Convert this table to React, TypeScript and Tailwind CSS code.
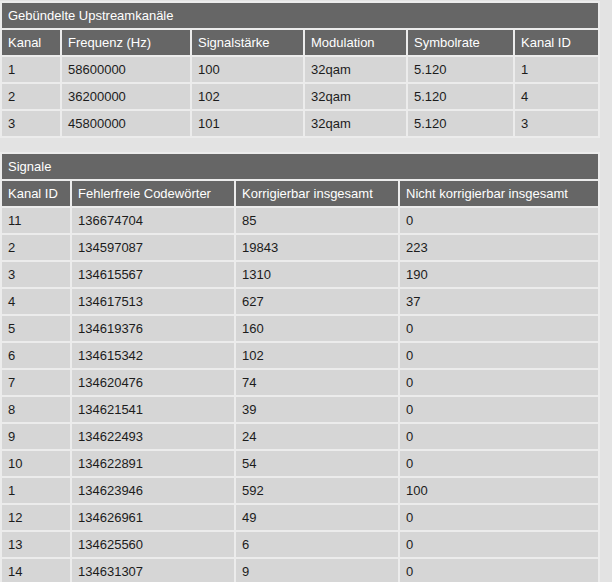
import React from 'react';

const upCols = '58px 128px 111px 101px 105px 83px';
const sigCols = '68px 162px 162px 198px';

const upstream = [
  ['1', '58600000', '100', '32qam', '5.120', '1'],
  ['2', '36200000', '102', '32qam', '5.120', '4'],
  ['3', '45800000', '101', '32qam', '5.120', '3'],
];

const signals = [
  ['11', '136674704', '85', '0'],
  ['2', '134597087', '19843', '223'],
  ['3', '134615567', '1310', '190'],
  ['4', '134617513', '627', '37'],
  ['5', '134619376', '160', '0'],
  ['6', '134615342', '102', '0'],
  ['7', '134620476', '74', '0'],
  ['8', '134621541', '39', '0'],
  ['9', '134622493', '24', '0'],
  ['10', '134622891', '54', '0'],
  ['1', '134623946', '592', '100'],
  ['12', '134626961', '49', '0'],
  ['13', '134625560', '6', '0'],
  ['14', '134631307', '9', '0'],
];

function DataTable({
  title,
  cols,
  headers,
  rows,
}: {
  title: string;
  cols: string;
  headers: string[];
  rows: string[][];
}) {
  return (
    <div className="w-[600px] bg-[#ececec] p-[2px] flex flex-col gap-[2px]">
      {/* Title bar */}
      <div className="h-[25px] bg-[#666666] text-white flex items-center px-[6px]">
        {title}
      </div>
      {/* Header row */}
      <div className="grid gap-[2px]" style={{ gridTemplateColumns: cols }}>
        {headers.map((h) => (
          <div
            key={h}
            className="h-[25px] bg-[#666666] text-white flex items-center px-[6px] whitespace-nowrap"
          >
            {h}
          </div>
        ))}
      </div>
      {rows.map((row, i) => (
        <div key={i} className="grid gap-[2px]" style={{ gridTemplateColumns: cols }}>
          {row.map((cell, j) => (
            <div
              key={j}
              className="h-[25px] bg-[#d6d6d6] text-[#1c1c1c] flex items-center px-[6px]"
            >
              {cell}
            </div>
          ))}
        </div>
      ))}
    </div>
  );
}

export default function App() {
  return (
    <div className="w-[612px] h-[582px] overflow-hidden bg-[#e3e3e3] pt-[1px] text-[13px] font-['Liberation_Sans',Arial,sans-serif]">
      <div className="flex flex-col gap-[14px]">
        <DataTable
          title="Gebündelte Upstreamkanäle"
          cols={upCols}
          headers={['Kanal', 'Frequenz (Hz)', 'Signalstärke', 'Modulation', 'Symbolrate', 'Kanal ID']}
          rows={upstream}
        />
        <DataTable
          title="Signale"
          cols={sigCols}
          headers={[
            'Kanal ID',
            'Fehlerfreie Codewörter',
            'Korrigierbar insgesamt',
            'Nicht korrigierbar insgesamt',
          ]}
          rows={signals}
        />
      </div>
    </div>
  );
}
